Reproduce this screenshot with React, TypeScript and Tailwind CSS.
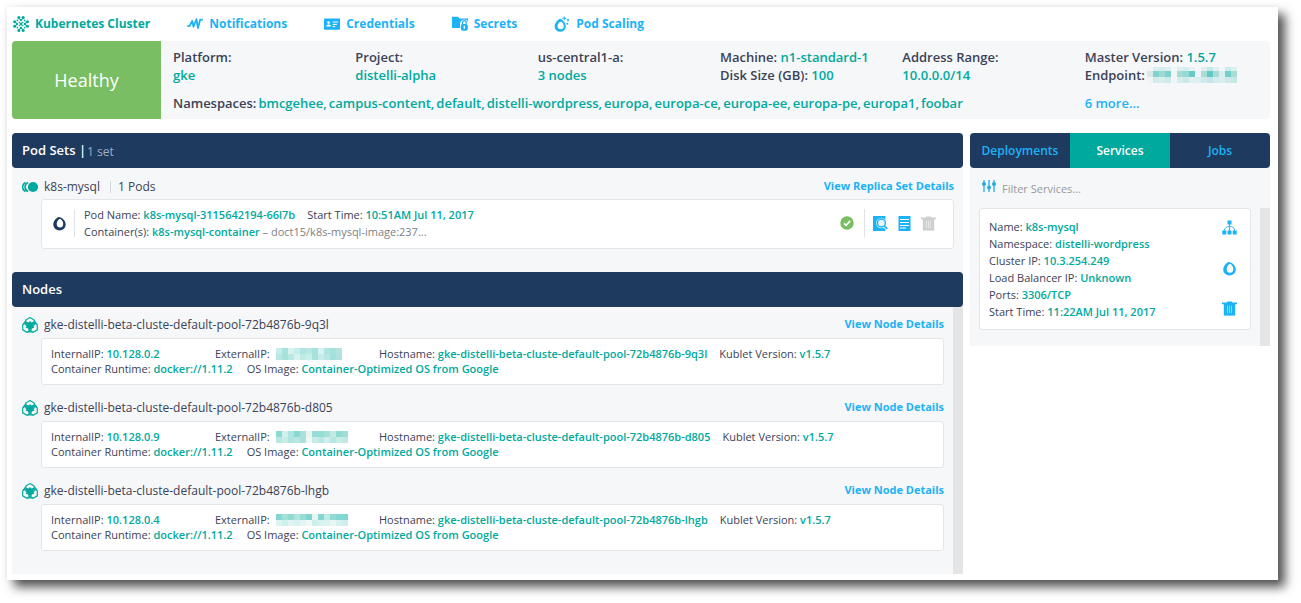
import React from "react";

type IconProps = { className?: string };

function ClusterIcon({ className }: IconProps) {
  const arms = [0, 90, 180, 270];
  return (
    <svg viewBox="0 0 16 16" className={className} fill="currentColor" stroke="currentColor" aria-hidden="true">
      {arms.map((angle) => (
        <g key={angle} transform={`rotate(${angle} 8 8)`}>
          <circle cx="5.800" cy="1.600" r="1.500" stroke="none" />
          <circle cx="10.200" cy="1.600" r="1.500" stroke="none" />
          <path d="M5.800 1.800L8 4.400 10.200 1.800" fill="none" strokeWidth="1.100" />
          <circle cx="8" cy="4.200" r="1" stroke="none" />
          <circle cx="4.400" cy="4.400" r="0.900" stroke="none" />
        </g>
      ))}
      <path d="M5.900 5.900l4.200 4.200M10.100 5.900l-4.200 4.200" strokeWidth="1.300" />
    </svg>
  );
}

function PulseIcon({ className }: IconProps) {
  return (
    <svg viewBox="0 0 16 16" className={className} fill="none" stroke="currentColor" strokeWidth="1.800" aria-hidden="true">
      <path d="M0.300 10.200H2.500L5.200 5 6.500 10.800 9.400 3.200 11 12 13.200 3.600H15.800" strokeLinejoin="round" />
    </svg>
  );
}

function IdCardIcon({ className }: IconProps) {
  return (
    <svg viewBox="0 0 16 16" className={className} aria-hidden="true">
      <rect x="0" y="2.400" width="16" height="11.400" rx="0.600" fill="currentColor" />
      <circle cx="4.600" cy="6.600" r="1.300" fill="#fff" />
      <path d="M2.200 10.600c0-1.600 1.200-2.200 2.400-2.200S7 9 7 10.600z" fill="#fff" />
      <path d="M8.600 6h5.400M8.600 8.400h4.200M8.600 10.600h2.600" stroke="#fff" strokeWidth="1" />
    </svg>
  );
}

function SecretFolderIcon({ className }: IconProps) {
  return (
    <svg viewBox="0 0 16 16" className={className} aria-hidden="true">
      <path d="M0 0.800h6l1.400 1.600H16V12H0z" fill="currentColor" />
      <path d="M8 8c0-6 8.400-6 8.400 0v8H8z" fill="#fff" />
      <rect x="8.800" y="8" width="7" height="6.800" rx="2" fill="currentColor" />
      <path d="M10.400 8.400V6.600a1.900 1.900 0 0 1 3.800 0v1.800" fill="none" stroke="currentColor" strokeWidth="1.200" />
      <path d="M12.300 9.800v3" stroke="#fff" strokeWidth="1.300" />
    </svg>
  );
}

function ScalingIcon({ className }: IconProps) {
  return (
    <svg viewBox="0 0 16 17" className={className} aria-hidden="true">
      <path
        fillRule="evenodd"
        fill="currentColor"
        d="M6 3C3 4.400 0.200 7.600 0.200 11.200A5.900 5.600 0 0 0 12 11.200C12 7.800 9.600 4.400 6 3zM7 5.800C9 7 9.900 9 9.900 10.700A3.300 3.500 0 0 1 3.300 10.700C3.300 8.600 4.400 6.600 7 5.800z"
      />
      <path d="M10.400 0.400v4M8.400 2.400h4M14.400 3v2.600M13.100 4.300h2.600M13.600 7.200v2M12.600 8.200h2" stroke="currentColor" strokeWidth="1.100" fill="none" />
    </svg>
  );
}

function PodIcon({ className }: IconProps) {
  return (
    <svg viewBox="0 0 14 16" className={className} aria-hidden="true">
      <path
        fillRule="evenodd"
        fill="currentColor"
        d="M6 1C3 2.200 0.300 5.800 0.300 9.200A6.700 6.300 0 0 0 13.700 9.200C13.700 5 10 1.200 6 1zM7.800 2.800C10.200 4.400 11 6.600 11 8.400A3.500 4 0 0 1 4 8.400C4 6.200 5.400 3.600 7.800 2.800z"
      />
    </svg>
  );
}

function ReplicaIcon({ className }: IconProps) {
  return (
    <svg viewBox="0 0 17 12" className={className} aria-hidden="true">
      <g fill="none" stroke="currentColor" strokeWidth="1.600">
        <path d="M3.600 1.400A5 5 0 0 0 3.600 10.600" />
        <path d="M6.100 1.400A5 5 0 0 0 6.100 10.600" />
      </g>
      <circle cx="11" cy="6" r="5.100" fill="currentColor" />
    </svg>
  );
}

function NodeIcon({ className }: IconProps) {
  return (
    <svg viewBox="0 0 16 16" className={className} fill="none" stroke="currentColor" strokeWidth="1.200" aria-hidden="true">
      <path d="M8 0.600L12.200 3V8L8 10.400 3.800 8V3z" />
      <path d="M4.900 5.400L9.100 7.800V12.800L4.900 15.200 0.700 12.800V7.800z" />
      <path d="M11.100 5.400L15.300 7.800V12.800L11.100 15.200 6.900 12.800V7.800z" />
      <path d="M8 4L9.300 5.600 12 5.800 11.400 8.600 12.200 10.800 9.600 11.600 8 13 6.400 11.600 3.800 10.800 4.600 8.600 4 5.800 6.700 5.600z" fill="currentColor" stroke="none" />
      <path d="M3.900 3.600L1.200 7.200M12.100 3.600L14.800 7.200M5.400 14.800h5.200" />
    </svg>
  );
}

function CheckIcon({ className }: IconProps) {
  return (
    <svg viewBox="0 0 14 14" className={className} role="img" aria-label="Running">
      <circle cx="7" cy="7" r="6.700" fill="#79be62" />
      <path d="M3.900 7.300l2.200 2.100 4-4.500" fill="none" stroke="#fff" strokeWidth="1.700" />
    </svg>
  );
}

function InspectIcon({ className }: IconProps) {
  return (
    <svg viewBox="0 0 15 15" className={className} aria-hidden="true">
      <path d="M0 0h12.400v15H0z" fill="currentColor" />
      <path d="M11 10l4 3.600" stroke="#fff" strokeWidth="3" />
      <circle cx="8.400" cy="7" r="5.200" fill="#fff" />
      <circle cx="8.400" cy="7" r="4" fill="#e8f7fe" stroke="currentColor" strokeWidth="1.500" />
      <path d="M11.200 9.800l3.200 3" stroke="currentColor" strokeWidth="1.700" />
    </svg>
  );
}

function LogIcon({ className }: IconProps) {
  return (
    <svg viewBox="0 0 15 15" className={className} aria-hidden="true">
      <path d="M1.500 0h12v15h-12z" fill="currentColor" />
      <path d="M3 3.500h9M3 6.500h9M3 9.500h9M3 12h6" stroke="#fff" strokeWidth="1" />
    </svg>
  );
}

function TrashIcon({ className }: IconProps) {
  return (
    <svg viewBox="0 0 15 15" className={className} aria-hidden="true">
      <path d="M0 1.500h5V0.400h5v1.100h5v1.800H0z" fill="currentColor" />
      <path d="M1.800 3h11.400v11.600H1.800z" fill="currentColor" />
      <path d="M5.500 4.600v7.600M7.500 4.600v7.600M9.500 4.600v7.600" stroke="#fff" strokeWidth="0.800" opacity="0.600" />
    </svg>
  );
}

function TreeIcon({ className }: IconProps) {
  return (
    <svg viewBox="0 0 15 15" className={className} aria-hidden="true">
      <path d="M5.500 0.500h4v4h-4zM0.300 10.500h4v4h-4zM5.500 10.500h4v4h-4zM10.700 10.500h4v4h-4z" fill="currentColor" />
      <path d="M7.500 4v7M2.300 11C2.300 8 4.500 6.500 7.500 6.500S12.700 8 12.700 11" fill="none" stroke="currentColor" strokeWidth="0.900" />
    </svg>
  );
}

function SlidersIcon({ className }: IconProps) {
  return (
    <svg viewBox="0 0 14 12" className={className} aria-hidden="true">
      <path d="M2 0v12M7 0v12M12 0v12" stroke="currentColor" strokeWidth="1.300" />
      <circle cx="2" cy="4" r="2" fill="currentColor" />
      <circle cx="7" cy="7.500" r="2" fill="currentColor" />
      <circle cx="12" cy="4" r="2" fill="currentColor" />
    </svg>
  );
}

/* Pixelated stand-in for a value that is hidden from the viewer. */
function Redacted({ rows, className }: { rows: string[][]; className?: string }) {
  return (
    <span className={`flex flex-col ${className ?? ""}`} role="img" aria-label="hidden">
      {rows.map((row, r) => (
        <span key={r} className="flex">
          {row.map((color, c) => (
            <span key={c} className="size-1.5" style={{ backgroundColor: color }} />
          ))}
        </span>
      ))}
    </span>
  );
}

const endpointMosaic = [
  ["#f2f5f6", "#dceff0", "#d0ecec", "#dceff0", "#f3f6f8", "#dceff0", "#d4eeee", "#e4f2f3", "#f3f6f8", "#dff0f1", "#c4e8e8", "#e0f0f2", "#f3f6f8", "#cdebeb", "#dff0f1"],
  ["#d8e9e6", "#7fd4d0", "#9cdad4", "#7cd2cd", "#f2f5f6", "#a6dcd6", "#98d8d4", "#67ccc6", "#eef4f5", "#a9dcd5", "#62cac6", "#a9dcd5", "#d9efef", "#72cfca", "#a9dcd5"],
  ["#f2f5f6", "#d2ecec", "#d8eeee", "#cfeaea", "#f0f5f6", "#d4ecec", "#cce9e9", "#e0f0f2", "#dceff0", "#d0ebeb", "#c4e6e6", "#d4ecec", "#dceff0", "#cce9e9", "#c8e6e4"],
];

const nodes = [
  {
    name: "gke-distelli-beta-cluste-default-pool-72b4876b-9q3l",
    ip: "10.128.0.2",
    mosaic: [
      ["#c8ece8", "#a8e2dc", "#d8f2f0", "#c4ecea", "#b0e4e0", "#b8e8e4", "#a8e0dc", "#d8f4f2", "#b0e4de", "#a8e0dc", "#b4e4e0"],
      ["#b8e6e2", "#a8e0dc", "#b8e8e4", "#d8f2f0", "#c0eae6", "#c8eeea", "#a8e0dc", "#c4ecea", "#b8e8e4", "#a4e0da", "#b0e2de"],
    ],
  },
  {
    name: "gke-distelli-beta-cluste-default-pool-72b4876b-d805",
    ip: "10.128.0.9",
    mosaic: [
      ["#8cd8d2", "#d0f0ec", "#b0e4e0", "#88d8d2", "#a8e0dc", "#eaf5f2", "#98dcd6", "#98dcd6", "#a4e0da", "#c0eae6", "#90dad4", "#a0ded8"],
      ["#b8e8e4", "#c8ece8", "#b0e4e0", "#b8e6e2", "#a8e0dc", "#f0f8f8", "#c8ece8", "#b8e8e4", "#d0eeec", "#b8e6e2", "#c8ece8", "#c0e8e4"],
    ],
  },
  {
    name: "gke-distelli-beta-cluste-default-pool-72b4876b-lhgb",
    ip: "10.128.0.4",
    mosaic: [
      ["#84d6d0", "#a4e0da", "#94dad4", "#b0e4e0", "#98dcd6", "#80d4ce", "#e8f4f2", "#84d6d0", "#c0eae6", "#94dad4", "#84d6d0", "#84d6d0"],
      ["#dcf3f1", "#d0f0ec", "#e0f4f2", "#d8f2f0", "#e4f5f3", "#f0f8f8", "#d0eeec", "#d8f2f0", "#dcf3f1", "#e8f6f4", "#d8f0ee", "#d0eeec"],
    ],
  },
];

const navItems = [
  { label: "Kubernetes Cluster", icon: ClusterIcon, active: true },
  { label: "Notifications", icon: PulseIcon, active: false },
  { label: "Credentials", icon: IdCardIcon, active: false },
  { label: "Secrets", icon: SecretFolderIcon, active: false },
  { label: "Pod Scaling", icon: ScalingIcon, active: false },
];

const namespaces = [
  "bmcgehee", "campus-content", "default", "distelli-wordpress", "europa",
  "europa-ce", "europa-ee", "europa-pe", "europa1", "foobar",
];

const serviceFields = [
  ["Name", "k8s-mysql"],
  ["Namespace", "distelli-wordpress"],
  ["Cluster IP", "10.3.254.249"],
  ["Load Balancer IP", "Unknown"],
  ["Ports", "3306/TCP"],
  ["Start Time", "11:22AM Jul 11, 2017"],
];

function Value({ children }: { children: React.ReactNode }) {
  return <span className="font-semibold text-[#00a99d]">{children}</span>;
}

function Field({ label, children, className }: { label: string; children: React.ReactNode; className?: string }) {
  return (
    <span className={className}>
      {label}: <Value>{children}</Value>
    </span>
  );
}

export default function App() {
  return (
    <div className="overflow-hidden pt-[7px] pr-[23px] pb-[23px] pl-[7px] font-['Open_Sans',sans-serif] text-[#3c4257]">
      <div className="bg-white pr-2 pb-1.5 pl-[5px] shadow-[7px_7px_10px_0_rgba(0,0,0,0.68),0_0_6px_rgba(0,0,0,0.06)]">
        <nav className="flex h-[34px] items-center gap-[37px] pl-px text-xs font-bold">
          {navItems.map(({ label, icon: Icon, active }) => (
            <a
              key={label}
              href="#"
              className={active ? "flex items-center gap-1.5 text-[#00a99d]" : "flex items-center gap-1.5 text-[#1cb2f6]"}
            >
              <Icon className="size-4" />
              {label}
            </a>
          ))}
        </nav>

        <section className="flex overflow-hidden rounded bg-[#f5f7f9]">
          <div className="flex w-[149px] shrink-0 items-center justify-center bg-[#79be62] text-lg text-white">Healthy</div>
          <div className="grid flex-1 grid-cols-6 gap-y-2.5 py-[7px] pr-[3px] pl-3 text-[13px] leading-[18px] font-semibold">
            <div>
              Platform:
              <br />
              <Value>gke</Value>
            </div>
            <div>
              Project:
              <br />
              <Value>distelli-alpha</Value>
            </div>
            <div>
              us-central1-a:
              <br />
              <Value>3 nodes</Value>
            </div>
            <div>
              <Field label="Machine">n1-standard-1</Field>
              <br />
              <Field label="Disk Size (GB)">100</Field>
            </div>
            <div>
              Address Range:
              <br />
              <Value>10.0.0.0/14</Value>
            </div>
            <div>
              <Field label="Master Version">1.5.7</Field>
              <div className="flex items-center gap-0.5">
                Endpoint:
                <Redacted rows={endpointMosaic} className="h-4 justify-end overflow-hidden" />
              </div>
            </div>
            <div className="col-span-5 flex gap-0.5">
              Namespaces:
              <ul className="flex gap-0.5 text-[#00a99d]">
                {namespaces.map((name, i) => (
                  <li key={name}>{i < namespaces.length - 1 ? `${name},` : name}</li>
                ))}
              </ul>
            </div>
            <a href="#" className="text-[#1cb2f6]">
              6 more...
            </a>
          </div>
        </section>

        <div className="mt-3.5 flex items-start gap-[7px]">
          <main className="flex-1 bg-[#f5f7f9]">
            <section>
              <h2 className="flex h-[35px] items-center rounded bg-[#1e3a5f] px-2.5 text-[13px] font-semibold text-white">
                Pod Sets |<span className="ml-px pt-0.5 text-xs font-normal text-[#9fb0c3]">1 set</span>
              </h2>
              <div className="pr-[9px] pb-[23px] pl-2.5">
                <div className="flex h-[31px] items-center pt-[7px] text-xs">
                  <ReplicaIcon className="h-3 w-[17px] text-[#00a99d]" />
                  <span className="ml-[5px]">k8s-mysql</span>
                  <span className="ml-2.5 border-l border-[#d5d8dc] pl-[7px] leading-3">1 Pods</span>
                  <a href="#" className="ml-auto pb-0.5 text-[11px] font-bold text-[#1cb2f6]">
                    View Replica Set Details
                  </a>
                </div>
                <div className="ml-[19px] flex h-[50px] items-center rounded-[3px] border border-[#e3e6e9] bg-white pb-0.5 pl-[11px] text-[11px] leading-[17px]">
                  <PodIcon className="h-[15px] w-[13px] text-[#1e3a5f]" />
                  <div className="ml-2 h-7 border-l border-[#dfe2e6]" />
                  <div className="ml-[9px] flex-1">
                    <Field label="Pod Name">k8s-mysql-3115642194-66l7b</Field>
                    <Field label="Start Time" className="ml-3">10:51AM Jul 11, 2017</Field>
                    <br />
                    <Field label="Container(s)">k8s-mysql-container</Field>
                    <span className="text-[#7d7f85]"> – doct15/k8s-mysql-image:237...</span>
                  </div>
                  <CheckIcon className="size-3.5" />
                  <div className="ml-2.5 h-7 border-l border-[#dfe2e6]" />
                  <div className="mr-[17px] ml-2 flex gap-[9px] text-[#1cb2f6]">
                    <button type="button" aria-label="Inspect pod">
                      <InspectIcon className="size-[15px]" />
                    </button>
                    <button type="button" aria-label="View logs">
                      <LogIcon className="size-[15px]" />
                    </button>
                    <button type="button" aria-label="Delete pod" className="text-[#cfcfcf]">
                      <TrashIcon className="size-[15px]" />
                    </button>
                  </div>
                </div>
              </div>
            </section>

            <section>
              <h2 className="flex h-[35px] items-center rounded bg-[#1e3a5f] px-2.5 text-[13px] font-semibold text-white">Nodes</h2>
              <div className="flex">
                <div className="flex-1 pr-[9px] pb-[18px] pl-2.5">
                  {nodes.map((node) => (
                    <article key={node.name} className="mb-[5px]">
                      <div className="flex h-[31px] items-center pt-[5px] text-xs">
                        <NodeIcon className="size-4 text-[#00a99d]" />
                        <h3 className="ml-1.5">{node.name}</h3>
                        <a href="#" className="ml-auto pb-0.5 text-[11px] font-bold text-[#1cb2f6]">
                          View Node Details
                        </a>
                      </div>
                      <div className="ml-[19px] h-[47px] rounded-[3px] border border-[#e3e6e9] bg-white px-[9px] pt-[7px] text-[11px] leading-[15px]">
                        <div className="flex">
                          <Field label="InternalIP" className="w-[164px]">{node.ip}</Field>
                          <span className="flex w-[164px] items-center gap-1.5">
                            ExternalIP:
                            <Redacted rows={node.mosaic} />
                          </span>
                          <Field label="Hostname">{node.name}</Field>
                          <Field label="Kublet Version" className="ml-3">v1.5.7</Field>
                        </div>
                        <Field label="Container Runtime">docker://1.11.2</Field>
                        <Field label="OS Image" className="ml-3.5">Container-Optimized OS from Google</Field>
                      </div>
                    </article>
                  ))}
                </div>
                <div className="w-2.5 bg-[#e5e5e5]" />
              </div>
            </section>
          </main>

          <aside className="w-[300px] bg-[#f5f7f9]">
            <div role="tablist" className="grid h-[35px] grid-cols-3 overflow-hidden rounded bg-[#1e3a5f] text-xs font-semibold text-[#1cb2f6]">
              <button type="button" role="tab" aria-selected="false">Deployments</button>
              <button type="button" role="tab" aria-selected="true" className="bg-[#00a99d] text-white">Services</button>
              <button type="button" role="tab" aria-selected="false">Jobs</button>
            </div>
            <label className="flex h-10 items-center pl-3">
              <SlidersIcon className="mb-1 h-3 w-3.5 shrink-0 text-[#29abe2]" />
              <input
                type="text"
                aria-label="Filter services"
                placeholder="Filter Services..."
                className="ml-1.5 w-full bg-transparent pt-0.5 text-[11px] outline-none placeholder:text-[#999999]"
              />
            </label>
            <div className="flex">
              <div className="flex-1 pr-[9px] pb-4 pl-[9px]">
                <div className="flex justify-between rounded-[3px] border border-[#e3e6e9] bg-white p-[9px] text-[11px] leading-[17px]">
                  <div>
                    {serviceFields.map(([label, value]) => (
                      <div key={label}>
                        <Field label={label}>{value}</Field>
                      </div>
                    ))}
                  </div>
                  <div className="mr-1 flex flex-col justify-between pt-0.5 pb-1 text-[#1cb2f6]">
                    <button type="button" aria-label="View topology">
                      <TreeIcon className="size-[15px]" />
                    </button>
                    <button type="button" aria-label="View pods">
                      <PodIcon className="size-[15px]" />
                    </button>
                    <button type="button" aria-label="Delete service">
                      <TrashIcon className="size-[15px]" />
                    </button>
                  </div>
                </div>
              </div>
              <div className="w-2.5 bg-[#e5e5e5]" />
            </div>
          </aside>
        </div>
      </div>
    </div>
  );
}
